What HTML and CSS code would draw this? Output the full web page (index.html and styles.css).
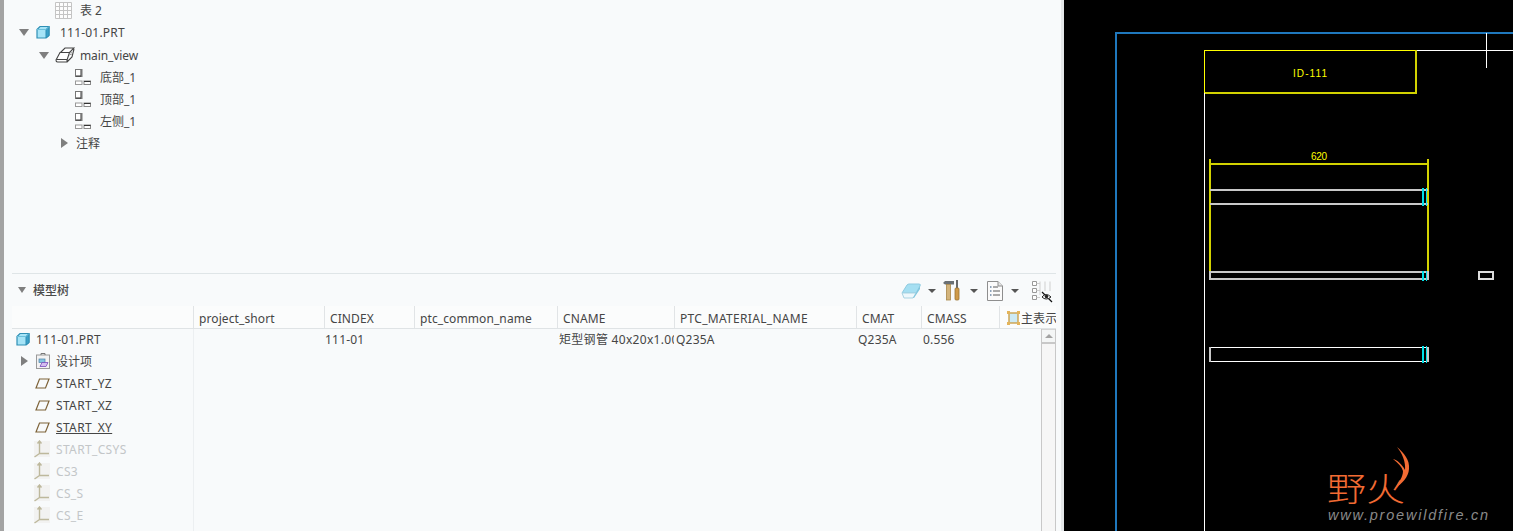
FILE: index.html
```html
<!DOCTYPE html>
<html lang="zh">
<head>
<meta charset="utf-8">
<title>模型树</title>
<link rel="stylesheet" href="styles.css">
</head>
<body>
<svg width="0" height="0" class="defs">
  <defs>
    <symbol id="part" viewBox="0 0 14 14">
      <path d="M1 4.500 4 1.500H13V10.500L10 13H1Z" fill="#a6e4f7" stroke="#2f8fb5" stroke-width="1.200"/>
      <path d="M10 4.500V13L13 10.500V1.500Z" fill="#3aa0c8" stroke="#2f8fb5"/>
      <path d="M1 4.500H10L13 1.500" fill="none" stroke="#6cc0dc"/>
    </symbol>
    <symbol id="viewpart" viewBox="0 0 20 16">
      <path d="M5.500 5.500 10 1H19L14.500 5.500Z M1 13 5 5.500H14.500L12 13V15H2.500Q1 15 1 13Z M12 15 17 10 19 2" fill="#fff" stroke="#444" stroke-width="1.100"/>
      <path d="M1.500 12.500H12" stroke="#444" fill="none"/>
      <path d="M15 6 17 5M14 8 17 7" stroke="#999" fill="none"/>
    </symbol>
    <symbol id="sheetview" viewBox="0 0 16 16">
      <rect x=".5" y=".5" width="6.500" height="7" fill="#fff" stroke="#777"/>
      <path d="M6 1V7H1" stroke="#333" fill="none"/>
      <rect x=".5" y="12" width="6.500" height="3.500" fill="#fff" stroke="#999"/>
      <rect x="9" y="12" width="6.500" height="3.500" fill="#fff" stroke="#888"/>
      <path d="M9 12.500H15.500" stroke="#333"/>
    </symbol>
    <symbol id="plane" viewBox="0 0 15 11">
      <path d="M1 10 4.500 1H14L10.500 10Z" fill="none" stroke="#7d6238" stroke-width="1.200"/>
    </symbol>
    <symbol id="csys" viewBox="0 0 16 18">
      <rect width="16" height="16" y="1" fill="#f2f2f1"/>
      <path d="M5.500 1V13.500M5.500 13.500H15M5.500 13.500 .5 17M3.500 3.500 5.500 1 7.500 3.500" fill="none" stroke="#bdb89c" stroke-width="1.400"/>
    </symbol>
  </defs>
</svg>

<div class="strip"></div>

<main class="panel">
  <section class="upper">
    <ul class="tree">
      <li class="row ind-table">
        <svg class="ico-table" viewBox="0 0 17 17"><path d="M.5.500H16.500V16.500H.500ZM.5 4.500H16.500M.5 8.500H16.500M.5 12.500H16.500M4.500.500V16.500M8.500.500V16.500M12.500.500V16.500" fill="#fdfdfd" stroke="#c4c4c4"/></svg>
        <span>表 2</span>
      </li>
      <li class="row ind-part">
        <span class="tri down"></span>
        <svg class="ico-part"><use href="#part"/></svg>
        <span class="label-part">111-01.PRT</span>
      </li>
      <li class="row ind-view">
        <span class="tri down"></span>
        <svg class="ico-view"><use href="#viewpart"/></svg>
        <span class="label-view">main_view</span>
      </li>
      <li class="row ind-sheet"><svg class="ico-sheet"><use href="#sheetview"/></svg><span>底部_1</span></li>
      <li class="row ind-sheet"><svg class="ico-sheet"><use href="#sheetview"/></svg><span>顶部_1</span></li>
      <li class="row ind-sheet"><svg class="ico-sheet"><use href="#sheetview"/></svg><span>左侧_1</span></li>
      <li class="row ind-note"><span class="tri right"></span><span>注释</span></li>
    </ul>
  </section>

  <section class="lower">
    <header class="tree-head">
      <div class="tree-title"><span class="tri down small"></span><span>模型树</span></div>
      <div class="tools">
        <svg class="tool-eraser" viewBox="0 0 20 16"><path d="M1 10 6 2Q7 1 8 1H18Q20 1 19 3L15 10Z" fill="#a5dff2" stroke="#8fcbe0"/><path d="M1 10 3 15H12L15 10Z" fill="#eef8fc" stroke="#a9d3e2"/><path d="M12 15H13L19 6V3L15 10Z" fill="#7fc6de"/></svg>
        <span class="caret c-a"></span>
        <svg class="tool-hammer" viewBox="0 0 19 21"><path d="M0 3 2 1H11V4.500H2Z" fill="#6a7074"/><rect x="3.500" y="4.500" width="4" height="15.500" fill="#d3b47c" stroke="#a98749" stroke-width=".8"/><path d="M14 0V8" stroke="#444" stroke-width="1.600"/><rect x="12" y="8" width="4" height="12" rx="1" fill="#cf9a48" stroke="#9a7433" stroke-width=".8"/></svg>
        <span class="caret c-b"></span>
        <svg class="tool-doc" viewBox="0 0 16 20"><path d="M.5.500H11L15.500 5V19.500H.5Z" fill="#fbfbfb" stroke="#8e8e8e"/><path d="M11 .5V5H15.500" fill="#e5e5e5" stroke="#8e8e8e"/><path d="M6 6H11M6 10H13M6 14H13" stroke="#5b5b5b"/><path d="M3 6H4.500M3 10H4.500M3 14H4.500" stroke="#6b86a5" stroke-width="1.500"/></svg>
        <span class="caret c-b"></span>
        <svg class="tool-cols" viewBox="0 0 21 23"><path d="M.5.500H4.500V4.500H.5ZM.5 7.500H4.500V11.500H.5ZM.5 14.500H4.500V18.500H.5Z" fill="#fff" stroke="#999"/><path d="M4.500 2.500H8M4.500 9.500H8M4.500 16.500H8M8 .5V14M13 .5V10M18 .5V10" fill="none" stroke="#cfcfcf"/><path d="M10 11 20 21" stroke="#111" stroke-width="1.200"/><path d="M10 16Q14 11 19 16Q14 20 10 16Z" fill="#fff" stroke="#222"/><circle cx="14.500" cy="15.500" r="1.800" fill="#222"/></svg>
      </div>
    </header>

    <div class="col-head">
      <div class="cell c0"></div>
      <div class="cell c1">project_short</div>
      <div class="cell c2">CINDEX</div>
      <div class="cell c3">ptc_common_name</div>
      <div class="cell c4">CNAME</div>
      <div class="cell c5">PTC_MATERIAL_NAME</div>
      <div class="cell c6">CMAT</div>
      <div class="cell c7">CMASS</div>
      <div class="cell c8">
        <svg class="ico-rep" viewBox="0 0 13 14"><rect x="2" y="2" width="9" height="10" fill="#cdeaf5" stroke="#c99a3c" stroke-width="1.300"/><path d="M0 0H3V3H0ZM10 0H13V3H10ZM0 11H3V14H0ZM10 11H13V14H10Z" fill="#e4b45a"/></svg>
        <span>主表示</span>
      </div>
    </div>

    <div class="body">
      <ul class="model-tree">
        <li class="row m-part"><svg class="ico-part"><use href="#part"/></svg><span>111-01.PRT</span></li>
        <li class="row m-item">
          <span class="tri right"></span>
          <svg class="ico-design" viewBox="0 0 14 16"><rect x=".5" y="2" width="13" height="13.500" fill="#f3f3f3" stroke="#9a9a9a"/><path d="M5 2V.5H9V2" fill="none" stroke="#777"/><rect x="3" y="6" width="6" height="3.500" fill="#86c6e2" stroke="#4a7fa6" stroke-width=".7"/><path d="M4 13.500 6 9.500H12L10 13.500Z" fill="#d4bdf0" stroke="#7a4dbd" stroke-width=".8"/></svg>
          <span>设计项</span>
        </li>
        <li class="row m-leaf"><svg class="ico-plane"><use href="#plane"/></svg><span>START_YZ</span></li>
        <li class="row m-leaf"><svg class="ico-plane"><use href="#plane"/></svg><span>START_XZ</span></li>
        <li class="row m-leaf"><svg class="ico-plane"><use href="#plane"/></svg><span class="under">START_XY</span></li>
        <li class="row m-leaf dim"><svg class="ico-csys"><use href="#csys"/></svg><span>START_CSYS</span></li>
        <li class="row m-leaf dim"><svg class="ico-csys"><use href="#csys"/></svg><span>CS3</span></li>
        <li class="row m-leaf dim"><svg class="ico-csys"><use href="#csys"/></svg><span>CS_S</span></li>
        <li class="row m-leaf dim"><svg class="ico-csys"><use href="#csys"/></svg><span>CS_E</span></li>
        <li class="row m-leaf dim"><svg class="ico-next" viewBox="0 0 16 16"><rect x="7" y="3" width="8" height="12" fill="#f2f2f1" stroke="#c4c4c4"/></svg></li>
      </ul>
      <div class="grid">
        <div class="data-row">
          <div class="val v1"></div>
          <div class="val v2">111-01</div>
          <div class="val v3"></div>
          <div class="val v4">矩型钢管 40x20x1.00</div>
          <div class="val v5">Q235A</div>
          <div class="val v6">Q235A</div>
          <div class="val v7">0.556</div>
        </div>
        <div class="vscroll">
          <div class="vs-btn"><span class="vs-arrow"></span></div>
          <div class="vs-thumb"></div>
        </div>
      </div>
    </div>
  </section>
</main>

<div class="side-gutter"></div>

<div class="canvas">
  <svg class="drawing" viewBox="0 0 449 531" shape-rendering="crispEdges">
    <path d="M52 531V33H449" fill="none" stroke="#1f78bd" stroke-width="2"/>
    <path d="M140.500 531V93" stroke="#fff" fill="none"/>
    <path d="M352 50.500H449M422.500 33V68" stroke="#fff" fill="none"/>
    <path d="M141 50.500H352" stroke="#ffff00" fill="none"/>
    <path d="M140.500 50V93" stroke="#ffff00" fill="none"/>
    <path d="M352 50V93.500M141 92.500H353" stroke="#d2d200" stroke-width="2" fill="none"/>
    <text class="cad-t" x="229" y="77" textLength="34" lengthAdjust="spacing">ID-111</text>
    <text class="cad-t" x="247" y="160" textLength="16" lengthAdjust="spacing">620</text>
    <path d="M146 159V272M364 159V272M146 164H364" stroke="#d2d200" stroke-width="2" fill="none"/>
    <path d="M146 190H364M146 204H364" stroke="#c8c8c8" stroke-width="2" fill="none"/>
    <path d="M146 272H365M146 279H365M146 271V280M364 271V280" stroke="#c8c8c8" stroke-width="2" fill="none"/>
    <rect x="415" y="272" width="14" height="7" fill="none" stroke="#dcdcdc" stroke-width="2"/>
    <path d="M146 347.500H364M146 361.500H364" stroke="#fff" fill="none"/>
    <path d="M146 347V362M364 347V362" stroke="#c8c8c8" stroke-width="2" fill="none"/>
    <path d="M359 188V206M359 271V281M359 346V363" stroke="#00e0e8" stroke-width="2" fill="none"/>
    <path d="M362.500 188V206M362.500 271V281M362.500 346V363" stroke="#00e0e8" fill="none"/>
  </svg>
  <div class="logo">
    <div class="logo-top">
      <span class="logo-cn">野火</span>
      <svg class="flame" viewBox="0 0 20 42"><path d="M7 0C14 6 20 13 19 22C18.500 30 12 37 5 41C9 35 13 30 13 24C12 20 8 16 3 12C7 13 12 17 15 23C16 15 12 6 7 0Z" fill="#f26b33"/></svg>
    </div>
    <div class="logo-url">www.proewildfire.cn</div>
  </div>
</div>
</body>
</html>
```
FILE: styles.css
```css
* { box-sizing: border-box; }
html, body { margin: 0; padding: 0; height: 531px; overflow: hidden; }
body {
  display: flex;
  width: 1513px;
  background: #000;
  font-family: "Noto Sans", "Noto Sans CJK SC", sans-serif;
  font-size: 12px;
  color: #454545;
}
ul { list-style: none; margin: 0; padding: 0; }
.defs { position: absolute; }
.strip { width: 4px; flex: none; background: #a3a3a3; }
.panel {
  width: 1057px;
  flex: none;
  background: #f8fafb;
  padding-left: 8px;
  display: flex;
  flex-direction: column;
}
.side-gutter { width: 3px; flex: none; background: #e4e7e9; }
.canvas { width: 449px; flex: none; position: relative; background: #000; overflow: hidden; }
.drawing { display: block; width: 449px; height: 531px; }

/* tree */
.upper { height: 274px; width: 1044px; flex: none; border-bottom: 1px solid #dfe5e7; overflow: hidden; }
.tree { margin-top: -1px; }
.row { height: 22px; display: flex; align-items: center; white-space: nowrap; }
.tri { width: 0; height: 0; flex: none; border-style: solid; border-color: transparent; }
.tri.down { border-width: 7px 5px 0; border-top-color: #7f7f7f; }
.tri.right { border-width: 5px 0 5px 7px; border-left-color: #7f7f7f; }
.tri.small { border-width: 6px 4.500px 0; }

.ind-table { padding-left: 43px; gap: 8px; }
.ico-table { width: 17px; height: 17px; flex: none; }
.ind-part { padding-left: 7px; }
.ico-part { width: 14px; height: 14px; flex: none; }
.ind-part .ico-part { margin-left: 7px; }
.label-part { margin-left: 10px; letter-spacing: .2px; }
.ind-view { padding-left: 27px; margin-top: 1px; }
.ico-view { width: 20px; height: 16px; flex: none; margin-left: 6px; margin-right: 5px; }
.label-view { letter-spacing: -.1px; }
.ind-sheet { padding-left: 63px; gap: 9px; }
.ico-sheet { width: 16px; height: 16px; flex: none; }
.ind-note { padding-left: 49px; gap: 8px; }

/* lower */
.lower { flex: 1; min-height: 0; display: flex; flex-direction: column; width: 1044px; }
.tree-head { height: 32px; flex: none; display: flex; align-items: center; justify-content: space-between; }
.tree-title { display: flex; align-items: center; gap: 7px; padding-left: 6px; color: #4a4a4a; font-weight: 500; }
.tools { display: flex; align-items: center; padding-right: 3px; padding-top: 1px; }
.tool-eraser { width: 20px; height: 16px; }
.tool-hammer { width: 19px; height: 21px; margin-left: 7px; }
.tool-doc { width: 16px; height: 20px; margin-left: 9px; }
.tool-cols { width: 21px; height: 23px; margin-left: 13px; margin-top: 3px; }
.caret { width: 0; height: 0; border-style: solid; border-color: transparent; border-width: 4px 4px 0; border-top-color: #555; }
.c-a { margin-left: 7px; }
.c-b { margin-left: 8px; }

.col-head { height: 23px; flex: none; display: flex; border-bottom: 1px solid #dfe3e5; background: #fbfcfc; }
.cell { height: 22px; display: flex; align-items: center; padding-left: 5px; padding-top: 2px; border-left: 1px solid #e1e4e6; flex: none; overflow: hidden; white-space: nowrap; letter-spacing: .1px; }
.c0 { width: 181px; border-left: 0; }
.c1 { width: 131px; }
.c2 { width: 90px; }
.c3 { width: 143px; }
.c4 { width: 117px; }
.c5 { width: 182px; letter-spacing: .3px; }
.c6 { width: 65px; }
.c7 { width: 78px; }
.c8 { flex: 1; min-width: 0; padding-left: 7px; gap: 1px; }
.ico-rep { width: 13px; height: 14px; flex: none; }

.body { flex: 1; min-height: 0; display: flex; overflow: hidden; }
.model-tree { width: 182px; flex: none; border-right: 1px solid #eceff1; padding-top: 0; }
.model-tree .row:first-child { margin-top: -1px; }
.m-part { padding-left: 4px; gap: 6px; letter-spacing: .2px; }
.m-item { padding-left: 9px; }
.ico-design { width: 14px; height: 16px; flex: none; margin-left: 8px; margin-right: 6px; }
.m-leaf { padding-left: 23px; gap: 6px; letter-spacing: .35px; }
.ico-plane { width: 15px; height: 11px; flex: none; }
.ico-csys { width: 16px; height: 18px; flex: none; margin-left: -1px; }
.ico-next { width: 16px; height: 16px; flex: none; margin-left: -1px; }
.dim { color: #c3c6c8; }
.under { text-decoration: underline; }

.grid { flex: 1; display: flex; min-width: 0; }
.data-row { display: flex; height: 22px; flex: 1; min-width: 0; align-items: center; margin-top: -1px; letter-spacing: .2px; }
.val { flex: none; overflow: hidden; white-space: nowrap; }
.v1 { width: 131px; }
.v2 { width: 90px; }
.v3 { width: 144px; }
.v4 { width: 115px; letter-spacing: .3px; margin-right: 2px; }
.v5 { width: 182px; }
.v6 { width: 65px; }
.v7 { width: 60px; }
.vscroll { width: 15px; flex: none; display: flex; flex-direction: column; background: #f6f6f6; border-left: 1px solid #c8c8c8; border-right: 1px solid #c8c8c8; }
.vs-btn { height: 15px; flex: none; display: flex; align-items: center; justify-content: center; background: #f4f6f6; border-top: 1px solid #d6d6d6; border-bottom: 2px solid #c8c8c8; }
.vs-arrow { width: 0; height: 0; border-style: solid; border-color: transparent; border-width: 0 4px 4px; border-bottom-color: #a3a3a3; }
.vs-thumb { flex: 1; }

/* canvas text */
.cad-t { fill: #ffff00; font-family: "Liberation Sans", sans-serif; font-size: 10px; }
.logo { position: absolute; left: 264px; top: 446px; width: 185px; }
.logo-top { position: relative; height: 61px; }
.logo-cn { position: absolute; left: -1px; top: 15px; color: #f26b33; font-size: 39px; line-height: 44px; font-family: "Noto Sans CJK SC", sans-serif; font-weight: 300; transform: scaleY(.85); transform-origin: left bottom; white-space: nowrap; }
.flame { position: absolute; left: 62px; top: 1px; width: 20px; height: 42px; }
.logo-url { color: #8a8a8a; font-family: "Liberation Sans", sans-serif; font-style: italic; font-size: 14.500px; letter-spacing: 1.780px; white-space: nowrap; }
```
